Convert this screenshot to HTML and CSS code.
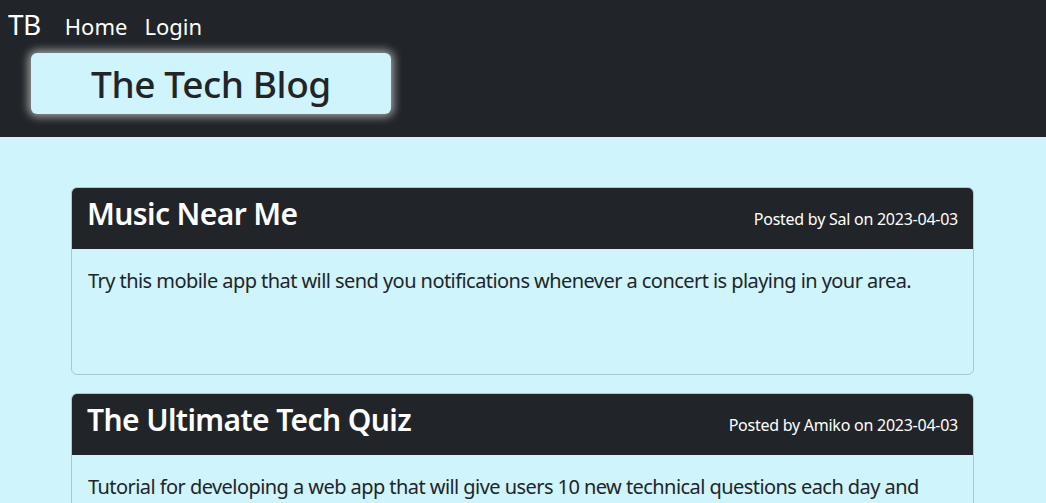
FILE: index.html
```html
<!DOCTYPE html>
<html lang="en">
<head>
<meta charset="utf-8">
<title>The Tech Blog</title>
<link rel="stylesheet" href="styles.css">
</head>
<body>
<header class="site-header">
  <nav class="topnav">
    <span class="brand">TB</span>
    <a class="nav-link" href="#">Home</a>
    <a class="nav-link" href="#">Login</a>
  </nav>
  <div class="title-box"><h1 class="site-title">The Tech Blog</h1></div>
</header>
<main class="posts">
  <article class="card">
    <div class="card-header">
      <h2 class="post-title">Music Near Me</h2>
      <span class="post-meta">Posted by Sal on 2023-04-03</span>
    </div>
    <div class="card-body">
      <p class="post-text">Try this mobile app that will send you notifications whenever a concert is playing in your area.</p>
    </div>
  </article>
  <article class="card">
    <div class="card-header">
      <h2 class="post-title">The Ultimate Tech Quiz</h2>
      <span class="post-meta">Posted by Amiko on 2023-04-03</span>
    </div>
    <div class="card-body">
      <p class="post-text">Tutorial for developing a web app that will give users 10 new technical questions each day and increase their knowledge of the world of technology.</p>
    </div>
  </article>
</main>
</body>
</html>
```
FILE: styles.css
```css
* { box-sizing: border-box; }
body {
  margin: 0;
  background: #cff4fc;
  color: #212529;
  font-family: "Noto Sans", "Open Sans", sans-serif;
  font-size: 16px;
  line-height: 1.5;
}
.site-header {
  background: #212529;
  height: 137px;
}
.topnav {
  display: flex;
  align-items: baseline;
  height: 50px;
  padding: 2px 8px 0;
}
.brand {
  color: #fff;
  font-size: 28px;
  line-height: 44px;
  letter-spacing: -0.5px;
  margin-right: 24px;
}
.nav-link {
  color: #fff;
  text-decoration: none;
  font-size: 22px;
  margin-right: 17px;
}
.title-box {
  margin: 3px 0 0 31px;
  width: 360px;
  height: 61px;
  background: #cff4fc;
  border-radius: 6px;
  box-shadow: 0 0 8px 3px rgba(255,255,255,0.55);
  display: flex;
  align-items: center;
  justify-content: center;
}
.site-title {
  margin: 2px 0 0;
  font-size: 37px;
  font-weight: 500;
  line-height: 1.2;
  letter-spacing: -0.4px;
}
.posts {
  padding: 50px 72px 0 71px;
  display: flex;
  flex-direction: column;
  gap: 18px;
}
.card {
  border: 1px solid rgba(0,0,0,0.175);
  border-radius: 6px;
  overflow: hidden;
}
.card-header {
  background: #212529;
  color: #fff;
  display: flex;
  justify-content: space-between;
  align-items: baseline;
  padding: 9px 16px 7px;
  height: 62px;
  margin: -1px -1px 0;
}
.post-title {
  margin: 0;
  font-size: 30px;
  font-weight: 600;
  line-height: 1.2;
  letter-spacing: -0.6px;
}
.post-meta {
  font-size: 16px;
  letter-spacing: -0.25px;
}
.card-body {
  padding: 17px 16px 15px;
  min-height: 125px;
}
.post-text {
  margin: 0;
  font-size: 20px;
  line-height: 1.5;
  letter-spacing: -0.56px;
}
```
